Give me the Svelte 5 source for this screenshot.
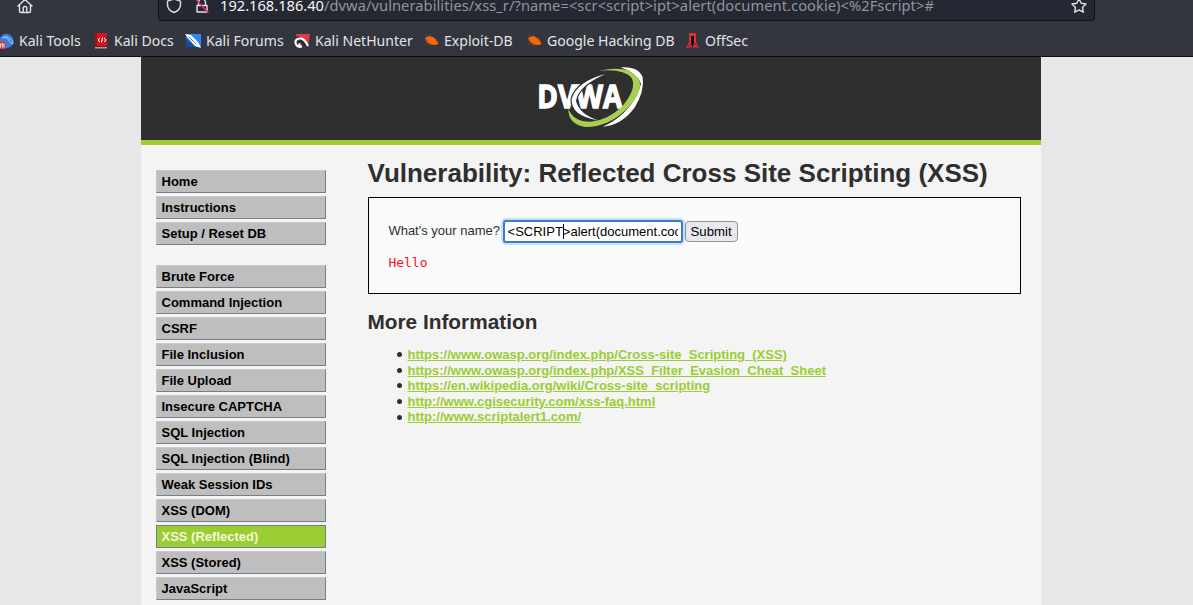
<script>
  const bookmarks = [
    ['tools', 'Kali Tools'], ['docs', 'Kali Docs'], ['forums', 'Kali Forums'],
    ['hunter', 'Kali NetHunter'], ['bug', 'Exploit-DB'], ['bug', 'Google Hacking DB'], ['offsec', 'OffSec']
  ];
  const menu = [
    ['Home', 'Instructions', 'Setup / Reset DB'],
    ['Brute Force', 'Command Injection', 'CSRF', 'File Inclusion', 'File Upload', 'Insecure CAPTCHA',
      'SQL Injection', 'SQL Injection (Blind)', 'Weak Session IDs', 'XSS (DOM)', 'XSS (Reflected)', 'XSS (Stored)', 'JavaScript']
  ];
  const links = [
    'https://www.owasp.org/index.php/Cross-site_Scripting_(XSS)',
    'https://www.owasp.org/index.php/XSS_Filter_Evasion_Cheat_Sheet',
    'https://en.wikipedia.org/wiki/Cross-site_scripting',
    'http://www.cgisecurity.com/xss-faq.html',
    'http://www.scriptalert1.com/'
  ];
  const host = '192.168.186.40';
  const path = '/dvwa/vulnerabilities/xss_r/?name=<scr<script>ipt>alert(document.cookie)<%2Fscript>#';
</script>

<div class="window">
  <header class="chrome">
    <div class="toolbar">
      <svg class="home" width="16" height="16" viewBox="0 0 16 16"><path d="M1 8 8 1.500 15 8M2.500 7v6q0 1.500 1.500 1.500h8q1.500 0 1.500-1.500V7M6.200 14V9.700q0-1.200 1.800-1.200t1.800 1.200V14" /></svg>
      <div class="url">
        <svg class="shield" width="16" height="16" viewBox="0 0 16 16"><path d="M8 1 14.500 3.200v3.300C14.500 10.500 12 13 8 14.500 4 13 1.500 10.500 1.500 6.500V3.200Z" /></svg>
        <svg class="lock" width="16" height="16" viewBox="0 0 16 16"><path d="M4.500 7V4.500a3.500 3.500 0 0 1 7 0V7M3 7.500h10v6.500H3Z" /><path class="slash" d="m1.500 1 12.500 13.500" /></svg>
        <span class="address"><b>{host}</b>{path}</span>
        <svg class="star" width="16" height="16" viewBox="0 0 16 16"><path d="m8 .8 2.200 4.500 4.800.7-3.500 3.400.8 4.800L8 11.900l-4.300 2.300.8-4.800L1 6l4.800-.7Z" /></svg>
      </div>
    </div>
    <nav class="bookmarks">
      {#each bookmarks as [icon, label]}
        <span class="bookmark">
          <svg width="16" height="16" viewBox="0 0 16 16">
            {#if icon === 'tools'}
              <circle cx="8.500" cy="8" r="7.200" fill="#397ed9" /><path d="M4 5q5-3 8 1 3 1 3 5M6 4q5 1 5 4l3 3" stroke="#9fcaff" fill="none" /><path d="M0 8.500h7.500V16H0z" fill="#e3343d" /><path d="M2.500 14.500V11h3.500v3.500M4.300 11v3.500" stroke="#ffd8d8" fill="none" />
            {:else if icon === 'docs'}
              <path d="M2 0h12v13H2z" fill="#d3161d" /><path d="M2 0h2v13H2z" fill="#a60d15" /><path d="M2 14h12v1.500H2z" fill="#db858a" /><path d="m7 5-2 2 2 2m4-4 2 2-2 2M9.500 4.500l-1 5" stroke="#fff" fill="none" />
            {:else if icon === 'forums'}
              <path d="M1 1h15v13H1z" fill="#2e87ee" /><path d="M1 5v9h10Z" fill="#174d99" /><path d="m0 1 6 1 7 7 3 6-6-2-7-8Z" fill="#fff" /><path d="m4 4 7 7" stroke="#39465c" stroke-width=".7" />
            {:else if icon === 'hunter'}
              <path d="M2 1h14l-2 12-3-4Q8 4 2 3Z" fill="#e73843" /><path d="M14 13Q10 5 6 5.500 1 6 1.500 10 3 15 8 13.500M8 13.500q-4 0-2-3" fill="none" stroke="#fff" stroke-width="2.200" /><path d="M4.500 8.500q4-2 6.500 4" stroke="#171b20" fill="none" />
            {:else if icon === 'bug'}
              <path d="m2 5 4-2 4 1 3 2 2.500 5-3 1-5-.5L4 9Z" fill="#f5690a" /><path d="m3 2 3 2m1-3 1 3M0 7h5m-3 4 4-2m0 4 2-3m2-6 2 2m0 1 3 1" stroke="#99471f" stroke-width=".8" />
            {:else}
              <path d="M5 0h7v9l3 6-4-1-2 1-2-1-5 1 3-6Z" fill="#df303a" /><path d="M7 3h3v7l-1 4H8l-1-4Z" fill="#101115" /><path d="m4 13 4-3m2 0 3 3" stroke="#731a22" />
            {/if}
          </svg>
          <span>{label}</span>
        </span>
      {/each}
    </nav>
  </header>

  <div class="page">
    <div class="banner">
      <svg class="logo" width="140" height="83" viewBox="0 3 420 249">
        <path d="M302 34Q356 30 368 64 374 105 345 153 306 208 248 212 282 198 310 172 352 130 363 83 352 52 302 34Z" fill="#fff" />
        <text x="52" y="156" textLength="255" lengthAdjust="spacingAndGlyphs">DVWA</text>
        <path class="arc" d="M256 54Q172 76 155 128 151 179 235 193 179 176 168 135 173 91 256 54Z" />
        <path d="M237 44Q336 23 359 76 367 115 316 163 263 213 198 213 144 205 145 158 160 197 211 197 266 192 308 149 351 98 335 66 311 37 237 44Z" fill="#a7d052" />
      </svg>
    </div>
    <div class="body">
      <nav class="menu">
        {#each menu as group}
          <ul>
            {#each group as item}
              <li class:selected={item === 'XSS (Reflected)'}>{item}</li>
            {/each}
          </ul>
        {/each}
      </nav>
      <main>
        <h1>Vulnerability: Reflected Cross Site Scripting (XSS)</h1>
        <section class="panel">
          <div class="form">
            <span class="label">What's your name?</span>
            <div class="field"><span>&lt;SCRIPT<i class="caret"></i>&gt;alert(document.cookie)</span></div>
            <button>Submit</button>
          </div>
          <pre>Hello</pre>
        </section>
        <h2>More Information</h2>
        <ul class="links">
          {#each links as link}
            <li><a href={link}>{link}</a></li>
          {/each}
        </ul>
      </main>
    </div>
  </div>
</div>

<style>
  :global(body) { margin: 0; overflow: hidden; }
  * { box-sizing: border-box; }
  .window { width: 1193px; height: 605px; overflow: hidden; display: flex; flex-direction: column; background: #e7e7e7; font-family: "Liberation Sans", Arial, sans-serif; }
  .chrome { height: 57px; flex: none; background: #33363e; border-bottom: 1px solid #0c0d12; color: #e3e3e5; font-family: "Noto Sans", sans-serif; }
  .toolbar { height: 21px; display: flex; align-items: flex-start; padding-left: 16.5px; }
  .toolbar svg { flex: none; fill: none; stroke: #e1e2e7; stroke-width: 1.4; stroke-linejoin: round; stroke-linecap: round; margin-top: -2px; }
  .toolbar .slash { stroke: #e2305c; }
  .url { width: 937px; height: 21px; margin-left: 125.5px; padding: 0 7px; display: flex; align-items: flex-start; background: #252833; border: 1px solid #10121b; border-top: 0; border-radius: 0 0 4px 4px; }
  .lock { margin-left: 12px; }
  .address { margin: -5px 0 0 10px; font-size: 14.67px; line-height: 20px; letter-spacing: 0.065px; color: #92949b; white-space: nowrap; }
  .address b { color: #f5f5f7; font-weight: 400; letter-spacing: 0; }
  .url .star { margin-left: auto; }
  .bookmarks { display: grid; grid-template-columns: 95px 92px 109px 129px 103px 158px 100px; height: 35px; padding-top: 10px; margin-left: -2px; }
  .bookmark { display: flex; align-items: center; gap: 5px; height: 20px; font-size: 14.05px; line-height: 20px; white-space: nowrap; }
  .bookmark svg { flex: none; }
  .page { width: 900px; height: 548px; margin-left: 141px; background: #f4f4f4; }
  .banner { height: 88px; background: #2f2f2f; border-bottom: 5px solid #a1cc36; padding-left: 379px; }
  .logo { display: block; }
  .logo text { font: 700 95px "Open Sans", sans-serif; fill: #fff; stroke: #fff; stroke-width: 4px; }
  .arc { fill: #fff; stroke: #2f2f2f; stroke-width: 7px; paint-order: stroke; }
  .body { display: flex; padding: 0 20px 0 15px; }
  .menu { width: 170px; padding-top: 25px; flex: none; }
  .menu ul { margin: 0 0 20px; padding: 0; list-style: none; display: flex; flex-direction: column; gap: 3px; }
  .menu li { height: 23px; padding-left: 4.5px; border: 1px solid; border-color: #c8c8c8 #708090 #708090 #c8c8c8; background: #bebebe; color: #000; font-size: 13px; font-weight: 700; line-height: 21px; }
  .menu .selected { background: #9acd32; border-color: #708090; color: #f5f8d8; }
  main { width: 653px; margin-left: 42px; color: #2f2f2f; }
  h1 { margin: 12px 0 8px -0.5px; font-size: 26px; line-height: 32px; white-space: nowrap; }
  .panel { height: 97px; border: 1px solid #000; background: #f9fbfa; padding: 22px 19.4px; }
  .form { display: flex; align-items: center; height: 23px; font-size: 13px; }
  .label { padding-bottom: 2px; }
  .field { width: 180px; height: 23px; margin-left: 2.6px; padding: 0 3px; border: 2px solid #3e7cc7; border-radius: 3px; box-shadow: 0 0 0 2px #c3e1fb; background: #fff; color: #000; font-size: 13px; line-height: 19px; white-space: nowrap; }
  .field span { display: block; overflow: hidden; }
  .caret { display: inline-block; width: 1px; height: 15px; margin-right: -1px; vertical-align: -3px; background: #000; }
  button { width: 53px; height: 21px; margin-left: 2px; padding: 0; border: 1px solid #8f8f9d; border-radius: 4px; background: #e9e9ed; color: #000; font: 13.2px "Liberation Sans", sans-serif; }
  pre { margin: 12px 0 0; font: 13px/16px "DejaVu Sans Mono", monospace; color: #f0141c; }
  h2 { margin: 15px 0 12px -0.5px; font-size: 20.8px; line-height: 26px; }
  .links { margin: 0; padding-left: 28.5px; list-style: none; font-size: 13px; font-weight: 700; line-height: 15.6px; }
  .links li { display: flex; align-items: center; gap: 6px; }
  .links li::before { content: ""; width: 5px; height: 5px; border-radius: 50%; background: #2f2f2f; }
  .links a { color: #9acd32; }
</style>
